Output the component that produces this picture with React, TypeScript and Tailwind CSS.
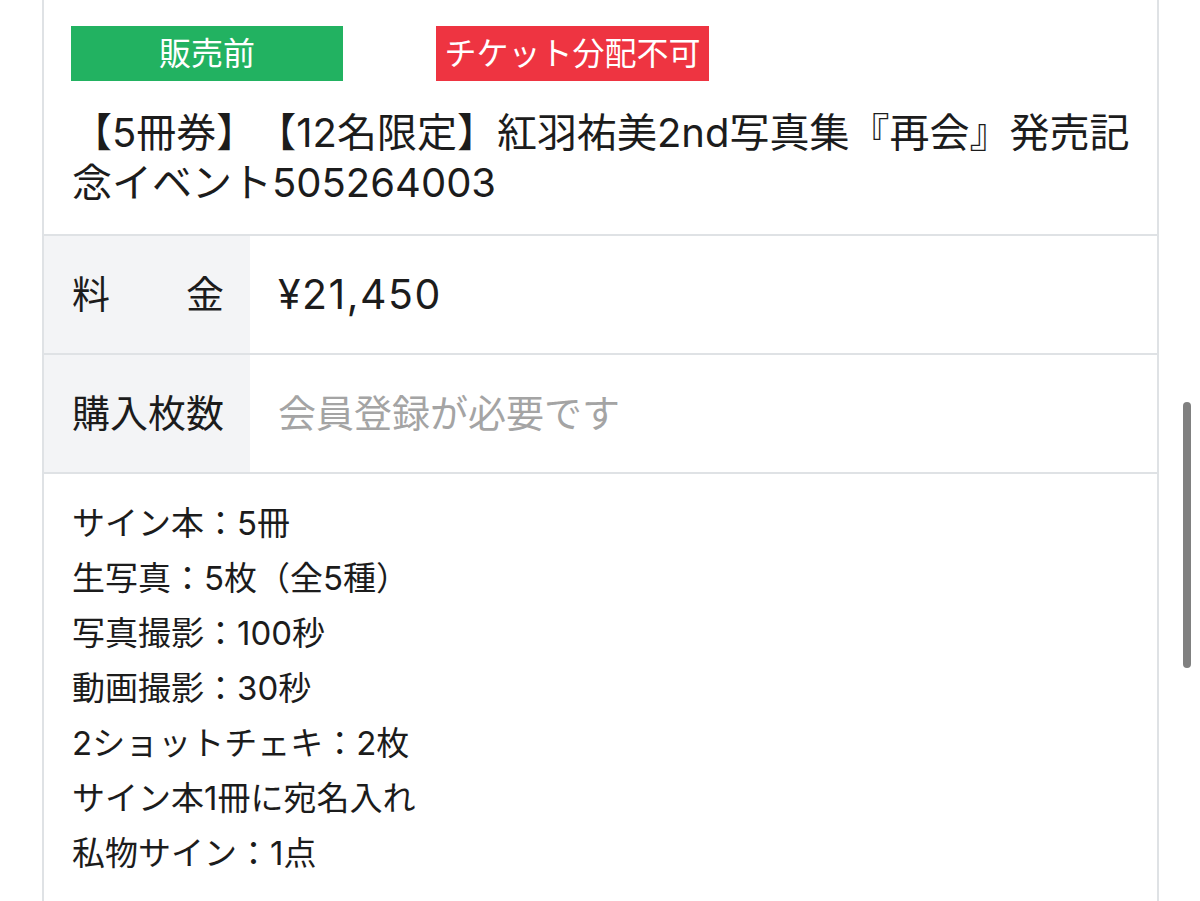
import React from "react";

const items = [
  "サイン本：5冊",
  "生写真：5枚（全5種）",
  "写真撮影：100秒",
  "動画撮影：30秒",
  "2ショットチェキ：2枚",
  "サイン本1冊に宛名入れ",
  "私物サイン：1点",
];

export default function App() {
  return (
    <div
      className="relative w-[1200px] h-[901px] overflow-hidden bg-white text-[#1c1c1c] [text-spacing-trim:space-all]"
      style={{ fontFamily: 'Inter, "Noto Sans CJK JP", sans-serif' }}
    >
      <div className="ml-[42px] w-[1117px] h-full border-x-2 border-[#dfe2e5]">
        <div className="pl-[27px] pr-[12px] pt-[26px] pb-[26px]">
          <div className="flex gap-[93px]">
            <div className="w-[272px] h-[55px] bg-[#22b261] text-white text-[32px] flex items-center justify-center whitespace-nowrap">
              販売前
            </div>
            <div className="w-[273px] h-[55px] bg-[#ee3441] text-white text-[32px] flex items-center justify-center whitespace-nowrap">
              チケット分配不可
            </div>
          </div>
          <div className="mt-[27px] pl-[1px] text-[40px] leading-[50px]">
            【5冊券】【12名限定】紅羽祐美2nd写真集『再会』発売記念イベント505264003
          </div>
        </div>
        <div className="border-t-2 border-[#dfe2e5] flex h-[119px]">
          <div className="w-[206px] bg-[#f3f4f6] pl-[28px] pr-[26px] flex items-center">
            <div className="w-full flex justify-between text-[38px]">
              <span>料</span>
              <span>金</span>
            </div>
          </div>
          <div className="flex-1 pl-[28px] flex items-center text-[41px] tracking-[1.5px]">¥21,450</div>
        </div>
        <div className="border-t-2 border-[#dfe2e5] flex h-[119px]">
          <div className="w-[206px] bg-[#f3f4f6] pl-[28px] flex items-center text-[38px] whitespace-nowrap">
            購入枚数
          </div>
          <div className="flex-1 pl-[28px] flex items-center text-[38px] text-[#a4a4a4]">
            会員登録が必要です
          </div>
        </div>
        <div className="border-t-2 border-[#dfe2e5] pl-[28px] pt-[22px] text-[33px] leading-[55px]">
          {items.map((t) => (
            <div key={t}>{t}</div>
          ))}
        </div>
      </div>
      <div className="absolute left-[1183px] top-[402px] w-[8px] h-[266px] rounded-full bg-[#808080]" />
    </div>
  );
}
